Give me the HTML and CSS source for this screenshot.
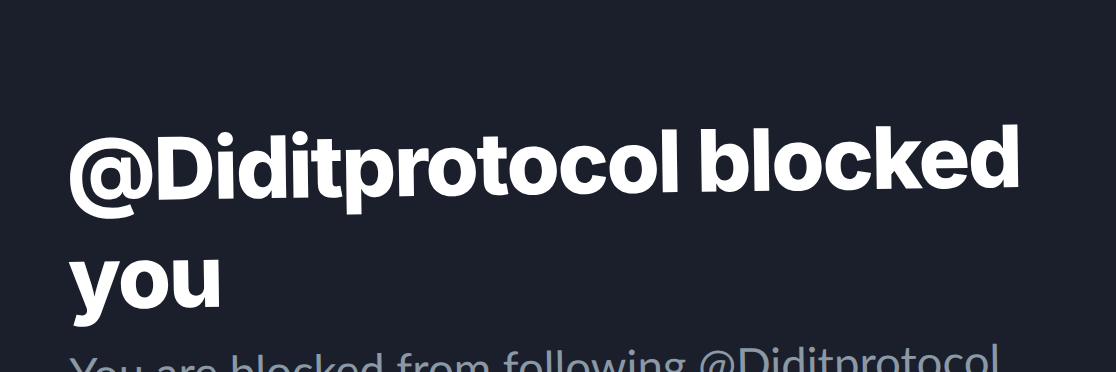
FILE: index.html
```html
<!DOCTYPE html>
<html lang="en">
<head>
    <meta charset="utf-8"/>
    <title>Blocked</title>
    <link rel="stylesheet" href="styles.css">
</head>
<body>
<div class="blocked">
    <h1 class="blocked-title">@Diditprotocol blocked you</h1>
    <p class="blocked-text">You are blocked from following @Diditprotocol</p>
</div>
</body>
</html>
```
FILE: styles.css
```css
body {
    margin: 0;
    height: 372px;
    overflow: hidden;
    background: #1a1f2b;
    font-family: "Inter", "Noto Sans", sans-serif;
}

.blocked {
    padding: 117px 0 0 64px;
    transform: rotate(-0.85deg);
    transform-origin: 0 0;
}

.blocked-title {
    margin: 0;
    width: 1010px;
    color: #ffffff;
    font-size: 86px;
    font-weight: 800;
    line-height: 108px;
    letter-spacing: -0.025em;
}

.blocked-text {
    margin: 14px 0 0;
    color: #8b98a5;
    font-family: "Lato", sans-serif;
    font-size: 45.5px;
    white-space: nowrap;
}
```
